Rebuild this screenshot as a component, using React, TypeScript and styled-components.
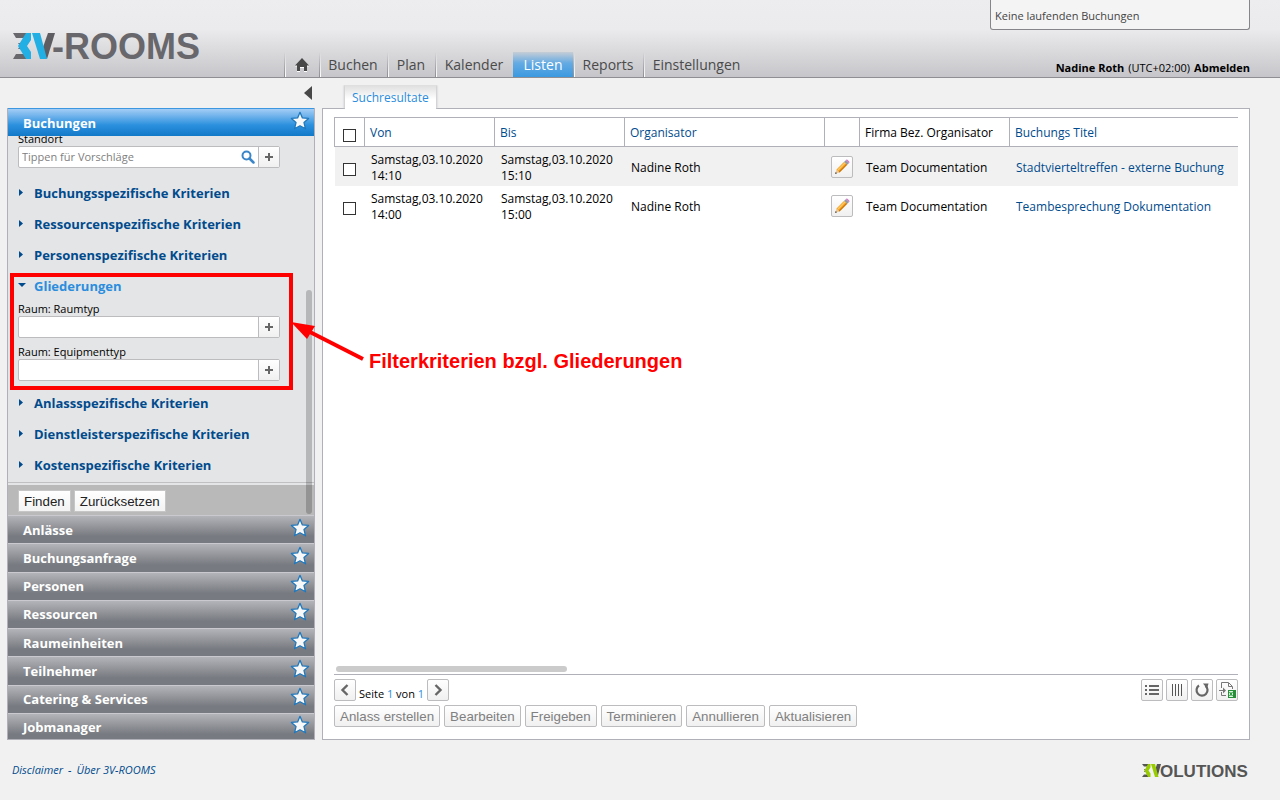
import React from "react";
import styled, { createGlobalStyle } from "styled-components";

const uiFont = `"Open Sans", "Noto Sans", sans-serif`;
const controlFont = `"Liberation Sans", Arial, sans-serif`;
const line = "#b0b0b8";
const navy = "#004b8d";
const azure = "#2a8ddd";

const GlobalStyle = createGlobalStyle`
  *, *::before, *::after { box-sizing: border-box; }
  body { margin: 0; background: #f1f1f1; color: #000; font: 12px/16px ${uiFont}; }
  a { color: inherit; text-decoration: none; }
  button, input { margin: 0; }
`;

const Page = styled.div`
  display: flex;
  flex-direction: column;
  min-height: 100vh;
`;

/* ---------- header ---------- */

const Header = styled.header`
  display: flex;
  align-items: flex-end;
  height: 78px;
  padding: 0 30px 0 12px;
  border-bottom: 1px solid #8f8f93;
  background: linear-gradient(#ededef 0, #ebebed 38%, #c6c6ca 100%);
`;

const LogoLink = styled.a`
  flex: 0 0 272px;
  height: 48px;
`;

const Nav = styled.nav`
  display: flex;
  flex: 1;
`;

const NavItem = styled.a<{ $width: number; $active?: boolean }>`
  display: flex;
  align-items: center;
  justify-content: center;
  flex: 0 0 ${(p) => p.$width}px;
  height: 25px;
  font-size: 14px;
  line-height: 20px;
  white-space: nowrap;
  color: ${(p) => (p.$active ? "#fff" : "#4a4a4a")};
  background: ${(p) =>
    p.$active
      ? "linear-gradient(#c6cdd6, #63aae3 45%, #3b99e0)"
      : "linear-gradient(#8f8f9300, #8f8f93) 0 0 / 1px 100% no-repeat, linear-gradient(#fff0, #fff) 1px 0 / 1px 100% no-repeat"};
`;

const HeaderSide = styled.div`
  display: flex;
  flex-direction: column;
  justify-content: space-between;
  align-items: flex-end;
  width: 260px;
  height: 77px;
`;

const RunningBox = styled.div`
  width: 100%;
  height: 30px;
  padding: 8px 4px 0;
  border: 1px solid #85858a;
  border-top: 0;
  border-radius: 0 0 3px 3px;
  background: #f4f4f4;
  color: #444;
  font-size: 11px;
  line-height: 16px;
`;

const UserLine = styled.div`
  display: flex;
  gap: 4px;
  font-size: 11px;
  line-height: 18px;
  white-space: nowrap;
  a, b { font-weight: 700; }
`;

/* ---------- work area ---------- */

const Workspace = styled.main`
  position: relative;
  display: grid;
  grid-template-columns: 308px minmax(0, 1fr);
  grid-template-rows: 30px minmax(632px, 1fr);
  column-gap: 7px;
  flex: 1;
  padding: 0 30px 0 7px;
`;

const CollapseButton = styled.button`
  justify-self: end;
  align-self: start;
  width: 8px;
  height: 14px;
  margin: 8px 3px 0 0;
  padding: 0;
  border: 0;
  background: #484848;
  clip-path: polygon(100% 0, 100% 100%, 0 50%);
`;

const TabRow = styled.div`
  display: flex;
  align-items: flex-end;
  padding-left: 23px;
`;

const Tab = styled.button`
  position: relative;
  width: 91px;
  height: 24px;
  margin-bottom: -1px;
  padding: 2px 0 0 7px;
  border: 0;
  background: linear-gradient(#dedede, #fff 60%);
  box-shadow: 1px 0 2px #c8c8cc, -1px 0 2px #c8c8cc;
  clip-path: inset(0 -3px);
  color: ${azure};
  font: 12px/22px ${uiFont};
  text-align: left;
  white-space: nowrap;
`;

/* ---------- sidebar ---------- */

const Sidebar = styled.aside`
  display: flex;
  flex-direction: column;
  overflow: hidden;
  border: 1px solid ${line};
  border-top: 0;
  background: #e4e5e6;
`;

const GroupHeader = styled.div<{ $open?: boolean }>`
  display: flex;
  align-items: center;
  justify-content: space-between;
  flex: none;
  padding: 0 4px 0 15px;
  height: ${(p) => (p.$open ? "28px" : "auto")};
  border-top: 1px solid ${(p) => (p.$open ? "#3c97e0" : "#c9c9cf")};
  background: ${(p) =>
    p.$open
      ? "linear-gradient(#a3cdf5, #2b90de 60%, #1279c8)"
      : "linear-gradient(#b3b4b9, #777a80 75%, #777a80)"};
  color: #fff;
  font-size: 13px;
  line-height: 20px;
  font-weight: 700;
`;

const StarButton = styled.button`
  display: flex;
  width: 20px;
  height: 20px;
  margin-bottom: 4px;
  padding: 0;
  border: 0;
  background: none;
`;

const SidebarBody = styled.div`
  position: relative;
  display: flex;
  flex-direction: column;
  flex: 1;
  min-height: 0;
`;

const Filters = styled.div`
  display: flex;
  flex-direction: column;
  justify-content: flex-end;
  flex: 1;
  min-height: 0;
  contain: size;
  overflow: hidden;
  padding: 0 34px 2px 10px;
  border-bottom: 1px solid #c0c0c2;
`;

const FilterSection = styled.div`
  flex: none;
  padding-bottom: 3px;
`;

const Field = styled.div`
  flex: none;
  margin-bottom: 6px;
`;

const FieldLabel = styled.label`
  display: block;
  font-size: 11px;
  line-height: 15px;
`;

const FieldRow = styled.div`
  display: flex;
  height: 22px;
  border: 1px solid #bcbcbe;
  border-radius: 2px;
  background: #fff;
`;

const TextInput = styled.input`
  flex: 1;
  min-width: 0;
  padding: 0 3px;
  border: 0;
  background: none;
  font: 11px/20px ${uiFont};
  &::placeholder { color: #808080; opacity: 1; }
`;

const InnerButton = styled.button<{ $divided?: boolean }>`
  display: flex;
  align-items: center;
  justify-content: center;
  width: 21px;
  padding: 0;
  border: 0;
  border-left: ${(p) => (p.$divided ? "1px solid #bcbcbe" : "0")};
  background: ${(p) => (p.$divided ? "linear-gradient(#fff, #f0f0f0)" : "none")};
`;

const Criterion = styled.button<{ $open?: boolean }>`
  display: flex;
  align-items: center;
  gap: 8px;
  flex: none;
  height: 31px;
  padding: 0;
  border: 0;
  background: none;
  color: ${(p) => (p.$open ? azure : navy)};
  font: 700 13px/20px ${uiFont};
  white-space: nowrap;
`;

const SidebarActions = styled.div`
  display: flex;
  gap: 3px;
  flex: none;
  height: 32px;
  padding: 5px 10px;
  border-top: 2px solid #e4e5e6;
  background: #b9b9b9;
`;

const PlainButton = styled.button`
  height: 22px;
  padding: 0 5px;
  border: 1px solid #c6c6c6;
  background: linear-gradient(#fff, #f3f3f3);
  color: #222;
  font-family: ${controlFont};
`;

const VerticalThumb = styled.div`
  position: absolute;
  right: 2px;
  bottom: 1px;
  width: 6px;
  height: 224px;
  border-radius: 3px;
  background: rgba(0, 0, 0, 0.2);
`;

const GroupList = styled.div`
  display: grid;
  grid-auto-rows: 1fr;
  flex: none;
  height: 226px;
  margin-bottom: -2px;
`;

/* ---------- result panel ---------- */

const Panel = styled.section`
  display: flex;
  flex-direction: column;
  padding: 8px 11px 12px;
  border: 1px solid ${line};
  background: #fff;
`;

const TableArea = styled.div`
  flex: 1;
  overflow: hidden;
`;

const Results = styled.table`
  width: 100%;
  table-layout: fixed;
  border-collapse: separate;
  border-spacing: 0;
  border-left: 1px solid ${line};
  border-image: linear-gradient(${line} 30px, transparent 30px) 1;
  border-width: 0 0 0 1px;
  font-size: 12px;
`;

const HeadCell = styled.th<{ $link?: boolean; $width?: number }>`
  width: ${(p) => (p.$width ? `${p.$width}px` : "auto")};
  height: 30px;
  padding: 2px 5px 0;
  border: 1px solid ${line};
  border-width: 1px 1px 1px 0;
  color: ${(p) => (p.$link ? navy : "#000")};
  font-weight: 400;
  text-align: left;
  white-space: nowrap;
  &:first-child { padding-left: 6px; }
  &:last-child { border-right: 0; }
`;

const BodyRow = styled.tr<{ $shaded?: boolean }>`
  background: ${(p) => (p.$shaded ? "#f1f1f1" : "#fff")};
`;

const Cell = styled.td<{ $link?: boolean; $control?: boolean }>`
  height: 39px;
  padding: ${(p) => (p.$control ? "0 0 0 6px" : "2px 0 0 6px")};
  color: ${(p) => (p.$link ? navy : "#000")};
  white-space: nowrap;
`;

const Check = styled.input`
  appearance: none;
  display: block;
  width: 13px;
  height: 13px;
  margin: 5px 0 0 2px;
  border: 1px solid #333;
  background: #fff;
`;

const IconButton = styled.button`
  display: flex;
  align-items: center;
  justify-content: center;
  width: 22px;
  height: 22px;
  padding: 0;
  border: 1px solid #bcbcbe;
  border-radius: 2px;
  background: linear-gradient(#fff, #f0f0f0);
`;

const HorizontalThumb = styled.div`
  width: 231px;
  height: 6px;
  margin: 0 0 2px 2px;
  border-radius: 3px;
  background: #cbcbcb;
`;

const PagerBar = styled.div`
  display: flex;
  justify-content: space-between;
  padding-top: 4px;
  border-top: 1px solid ${line};
`;

const Cluster = styled.div`
  display: flex;
  align-items: flex-end;
  gap: 3px;
`;

const PageInfo = styled.span`
  font-size: 11px;
  line-height: 14px;
  b { color: ${azure}; font-weight: 400; }
`;

const ActionRow = styled.div`
  display: flex;
  gap: 4px;
  margin-top: 4px;
`;

const DisabledButton = styled.button`
  height: 22px;
  padding: 0 5px;
  border: 1px solid #bcbcbe;
  border-radius: 2px;
  background: linear-gradient(#fff, #f0f0f0);
  color: #808080;
  font-family: ${controlFont};
  white-space: nowrap;
`;

/* ---------- callout ---------- */

const CalloutFrame = styled.div`
  position: absolute;
  left: 10px;
  top: 195px;
  width: 283px;
  height: 117px;
  border: 4px solid #f00;
  pointer-events: none;
`;

const CalloutArrow = styled.svg`
  position: absolute;
  left: 290px;
  top: 240px;
`;

const CalloutText = styled.div`
  position: absolute;
  left: 369px;
  top: 271px;
  color: #f00;
  font: 700 20px/24px ${controlFont};
  white-space: nowrap;
`;

/* ---------- footer ---------- */

const Footer = styled.footer`
  display: flex;
  justify-content: space-between;
  align-items: flex-start;
  height: 60px;
  padding: 22px 31px 0 12px;
  color: ${navy};
  font-size: 11px;
  font-style: italic;
`;

const FooterLinks = styled.div`
  display: flex;
  gap: 5px;
`;

/* ---------- drawings ---------- */

const Wordmark = styled.svg`
  display: block;
  overflow: visible;
  font-family: ${controlFont};
  font-weight: 700;
  font-style: normal;
`;

const RoomsLogo = () => (
  <Wordmark width="190" height="40" viewBox="0 0 190 40" role="img" aria-label="3V-ROOMS">
    <path d="M1 4h18l-5 5H4zM1 30l3-5h10l5 5zM1 4l5 5H4zM6 14h6v6H6l2-3z" fill="#67676c" />
    <path d="M36 4h7l-8 26-5-9z" fill="#5d5d62" />
    <path d="M14 4h5v7l-4 6 4 6v7h-5L6 17z" fill="#22afe4" />
    <path d="M20 4h8l7 26h-7z" fill="#22afe4" />
    <text x="40" y="30" fontSize="36" fill="#67676c">
      -ROOMS
    </text>
  </Wordmark>
);

const VolutionsLogo = () => (
  <Wordmark width="108" height="20" viewBox="0 0 108 20" role="img" aria-label="3VOLUTIONS">
    <path d="M1 2h8L7 4.500H3zM1 15l2-2.500h4L9 15zM3 7h3v3H3l1-1.500z" fill="#555" />
    <path d="M16 2h4l-3.500 13-3-5z" fill="#555" />
    <path d="M7 2h2.500v3.500l-2 3 2 3V15H7L3.500 8.500z" fill="#99cc00" />
    <path d="M10 2h4l3.500 13H14z" fill="#99cc00" />
    <text x="19" y="15" fontSize="17" fill="#555">
      OLUTIONS
    </text>
  </Wordmark>
);

const HomeIcon = () => (
  <svg width="14" height="14" viewBox="0 0 14 14" aria-hidden="true">
    <path d="M7 1.500 0 8.500h2V14h3v-4h4v4h3V8.500h2z" fill="#fff" />
    <path d="M7 0 0 7.500h2V13h3V9h4v4h3V7.500h2z" fill="#484848" />
  </svg>
);

const StarIcon = () => (
  <svg width="20" height="20" viewBox="0 0 20 20" aria-hidden="true">
    <path
      d="M10 1.300 12.400 6.900 18.600 7.400 14 11.600 15.500 17.800 10 14.800 4.500 17.800 6 11.600 1.400 7.400 7.600 6.900z"
      fill="#f8f8f8"
      stroke="#1f78bd"
      strokeWidth="1.300"
      strokeLinejoin="round"
    />
  </svg>
);

const SearchIcon = () => (
  <svg width="14" height="14" viewBox="0 0 14 14" aria-hidden="true">
    <circle cx="5.500" cy="5.500" r="4" fill="none" stroke="#3a86c8" strokeWidth="2" />
    <path d="m8.500 8.500 4 4" stroke="#3a86c8" strokeWidth="2.500" strokeLinecap="round" />
  </svg>
);

const PlusIcon = () => (
  <svg width="8" height="8" viewBox="0 0 8 8" aria-hidden="true">
    <path d="M3 0h2v3h3v2H5v3H3V5H0V3h3z" fill="#666" />
  </svg>
);

const Triangle = ({ open }: { open?: boolean }) => (
  <svg width="8" height="8" viewBox="0 0 8 8" aria-hidden="true">
    <path d={open ? "M0 1h8L4 5z" : "M1 0v7l4-3.500z"} fill={navy} />
  </svg>
);

const PencilIcon = () => (
  <svg width="16" height="16" viewBox="0 0 16 16" aria-hidden="true">
    <path d="M1 15l1.500-4.500 3 3z" fill="#e9c99a" />
    <path d="M1 15l.7-2.100 1.400 1.400z" fill="#444" />
    <path d="m2.500 10.500 7.700-7.700 3 3-7.700 7.700z" fill="#f59f1e" />
    <path d="m3.500 10.500 7.200-7.200 1 1-7.200 7.200z" fill="#ffc966" />
    <path d="m4.700 12.700 7.700-7.700.8.800-7.700 7.700z" fill="#c87410" />
    <path d="m10.200 2.800 1.600-1.600 3 3-1.600 1.600z" fill="#8d99a5" />
    <path d="m11.800 1.200.7-.7c.6-.6 3.600 2.400 3 3l-.7.7z" fill="#cc7fc4" />
  </svg>
);

const Chevron = ({ right }: { right?: boolean }) => (
  <svg width="12" height="12" viewBox="0 0 12 12" aria-hidden="true">
    <path d={right ? "m3.500 1 5 5-5 5" : "m8.500 1-5 5 5 5"} fill="none" stroke="#666" strokeWidth="2.400" />
  </svg>
);

const ListIcon = () => (
  <svg width="14" height="12" viewBox="0 0 14 12" aria-hidden="true">
    <path d="M0 1h2v2H0zM4 1h10v2H4zM0 5h2v2H0zM4 5h10v2H4zM0 9h2v2H0zM4 9h10v2H4z" fill="#666" />
  </svg>
);

const ColumnsIcon = () => (
  <svg width="10" height="12" viewBox="0 0 10 12" aria-hidden="true">
    <path d="M0 0h1v12H0zM3 0h1v12H3zM6 0h1v12H6zM9 0h1v12H9z" fill="#555" />
  </svg>
);

const ReloadIcon = () => (
  <svg width="14" height="14" viewBox="0 0 14 14" aria-hidden="true">
    <path d="M4 2.500a5.500 5.500 0 1 0 6.500.3" fill="none" stroke="#666" strokeWidth="2.200" />
    <path d="M8 .5h5.500l-1.500 5z" fill="#666" />
  </svg>
);

const ExportIcon = () => (
  <svg width="18" height="18" viewBox="0 0 18 18" aria-hidden="true">
    <path d="M3.500 7V1.500h7l4 4V8M3.500 11v3.500H8M10.500 2v3.500H14" fill="none" stroke="#777" />
    <path d="M1 9.500h6" stroke="#777" />
    <path d="M5 6.500 8 9.500 5 12.500z" fill="#777" />
    <rect x="10" y="9" width="8" height="8" fill="#259038" />
    <path d="M11 10h4v6h-4z" fill="#e6f4e8" />
    <path d="m11.500 11 3 4m0-4-3 4" stroke="#259038" strokeWidth="1.200" />
  </svg>
);

/* ---------- data ---------- */

const navItems = [
  { label: "Buchen", width: 68 },
  { label: "Plan", width: 48 },
  { label: "Kalender", width: 78 },
  { label: "Listen", width: 60, active: true },
  { label: "Reports", width: 70 },
  { label: "Einstellungen", width: 107 },
];

const groups = [
  "Anlässe",
  "Buchungsanfrage",
  "Personen",
  "Ressourcen",
  "Raumeinheiten",
  "Teilnehmer",
  "Catering & Services",
  "Jobmanager",
];

const bookings = [
  { from: "14:10", to: "15:10", title: "Stadtvierteltreffen - externe Buchung" },
  { from: "14:00", to: "15:00", title: "Teambesprechung Dokumentation" },
];

const actions = ["Anlass erstellen", "Bearbeiten", "Freigeben", "Terminieren", "Annullieren", "Aktualisieren"];

const FilterField = ({ id, label, search }: { id: string; label: string; search?: boolean }) => (
  <Field>
    <FieldLabel htmlFor={id}>{label}</FieldLabel>
    <FieldRow>
      <TextInput id={id} placeholder={search ? "Tippen für Vorschläge" : undefined} />
      {search && (
        <InnerButton aria-label="Suchen">
          <SearchIcon />
        </InnerButton>
      )}
      <InnerButton $divided aria-label="Hinzufügen">
        <PlusIcon />
      </InnerButton>
    </FieldRow>
  </Field>
);

const CriterionToggle = ({ label, open }: { label: string; open?: boolean }) => (
  <Criterion $open={open} aria-expanded={!!open}>
    <Triangle open={open} />
    {label}
  </Criterion>
);

export default function App() {
  return (
    <Page>
      <GlobalStyle />
      <Header>
        <LogoLink href="#">
          <RoomsLogo />
        </LogoLink>
        <Nav>
          <NavItem href="#" $width={35} aria-label="Start">
            <HomeIcon />
          </NavItem>
          {navItems.map((item) => (
            <NavItem href="#" key={item.label} $width={item.width} $active={item.active}>
              {item.label}
            </NavItem>
          ))}
        </Nav>
        <HeaderSide>
          <RunningBox>Keine laufenden Buchungen</RunningBox>
          <UserLine>
            <b>Nadine Roth</b>
            <span>(UTC+02:00)</span>
            <a href="#">Abmelden</a>
          </UserLine>
        </HeaderSide>
      </Header>

      <Workspace>
        <CollapseButton aria-label="Seitenleiste einklappen" />
        <TabRow>
          <Tab>Suchresultate</Tab>
        </TabRow>

        <Sidebar>
          <GroupHeader $open>
            Buchungen
            <StarButton aria-label="Favorit">
              <StarIcon />
            </StarButton>
          </GroupHeader>
          <SidebarBody>
            <Filters>
              <FilterSection>
                <FilterField id="standort" label="Standort" search />
              </FilterSection>
              <CriterionToggle label="Buchungsspezifische Kriterien" />
              <CriterionToggle label="Ressourcenspezifische Kriterien" />
              <CriterionToggle label="Personenspezifische Kriterien" />
              <CriterionToggle label="Gliederungen" open />
              <FilterField id="raumtyp" label="Raum: Raumtyp" />
              <FilterField id="equipmenttyp" label="Raum: Equipmenttyp" />
              <CriterionToggle label="Anlassspezifische Kriterien" />
              <CriterionToggle label="Dienstleisterspezifische Kriterien" />
              <CriterionToggle label="Kostenspezifische Kriterien" />
            </Filters>
            <SidebarActions>
              <PlainButton>Finden</PlainButton>
              <PlainButton>Zurücksetzen</PlainButton>
            </SidebarActions>
            <VerticalThumb />
          </SidebarBody>
          <GroupList>
            {groups.map((name) => (
              <GroupHeader key={name}>
                {name}
                <StarButton aria-label="Favorit">
                  <StarIcon />
                </StarButton>
              </GroupHeader>
            ))}
          </GroupList>
        </Sidebar>

        <Panel>
          <TableArea>
            <Results>
              <thead>
                <tr>
                  <HeadCell $width={30}>
                    <Check type="checkbox" aria-label="Alle auswählen" />
                  </HeadCell>
                  <HeadCell $link $width={130}>Von</HeadCell>
                  <HeadCell $link $width={130}>Bis</HeadCell>
                  <HeadCell $link $width={200}>Organisator</HeadCell>
                  <HeadCell $width={35} />
                  <HeadCell $width={150}>Firma Bez. Organisator</HeadCell>
                  <HeadCell $link>Buchungs Titel</HeadCell>
                </tr>
              </thead>
              <tbody>
                {bookings.map((row, index) => (
                  <BodyRow key={row.title} $shaded={index % 2 === 0}>
                    <Cell $control>
                      <Check type="checkbox" aria-label={row.title} />
                    </Cell>
                    <Cell>
                      Samstag,03.10.2020
                      <br />
                      {row.from}
                    </Cell>
                    <Cell>
                      Samstag,03.10.2020
                      <br />
                      {row.to}
                    </Cell>
                    <Cell>Nadine Roth</Cell>
                    <Cell $control>
                      <IconButton aria-label="Bearbeiten">
                        <PencilIcon />
                      </IconButton>
                    </Cell>
                    <Cell>Team Documentation</Cell>
                    <Cell $link>
                      <a href="#">{row.title}</a>
                    </Cell>
                  </BodyRow>
                ))}
              </tbody>
            </Results>
          </TableArea>
          <HorizontalThumb />
          <PagerBar>
            <Cluster>
              <IconButton aria-label="Vorherige Seite">
                <Chevron />
              </IconButton>
              <PageInfo>
                Seite <b>1</b> von <b>1</b>
              </PageInfo>
              <IconButton aria-label="Nächste Seite">
                <Chevron right />
              </IconButton>
            </Cluster>
            <Cluster>
              <IconButton aria-label="Liste">
                <ListIcon />
              </IconButton>
              <IconButton aria-label="Spalten">
                <ColumnsIcon />
              </IconButton>
              <IconButton aria-label="Neu laden">
                <ReloadIcon />
              </IconButton>
              <IconButton aria-label="Excel-Export">
                <ExportIcon />
              </IconButton>
            </Cluster>
          </PagerBar>
          <ActionRow>
            {actions.map((name) => (
              <DisabledButton key={name} disabled>
                {name}
              </DisabledButton>
            ))}
          </ActionRow>
        </Panel>

        <CalloutFrame />
        <CalloutArrow width="76" height="46" viewBox="0 0 76 46" aria-hidden="true">
          <path d="M16 12 73 41" stroke="#f00" strokeWidth="4" />
          <path d="M1 4 25 8 17 21z" fill="#f00" />
        </CalloutArrow>
        <CalloutText>Filterkriterien bzgl. Gliederungen</CalloutText>
      </Workspace>

      <Footer>
        <FooterLinks>
          <a href="#">Disclaimer</a>
          <span>-</span>
          <a href="#">Über 3V-ROOMS</a>
        </FooterLinks>
        <VolutionsLogo />
      </Footer>
    </Page>
  );
}
